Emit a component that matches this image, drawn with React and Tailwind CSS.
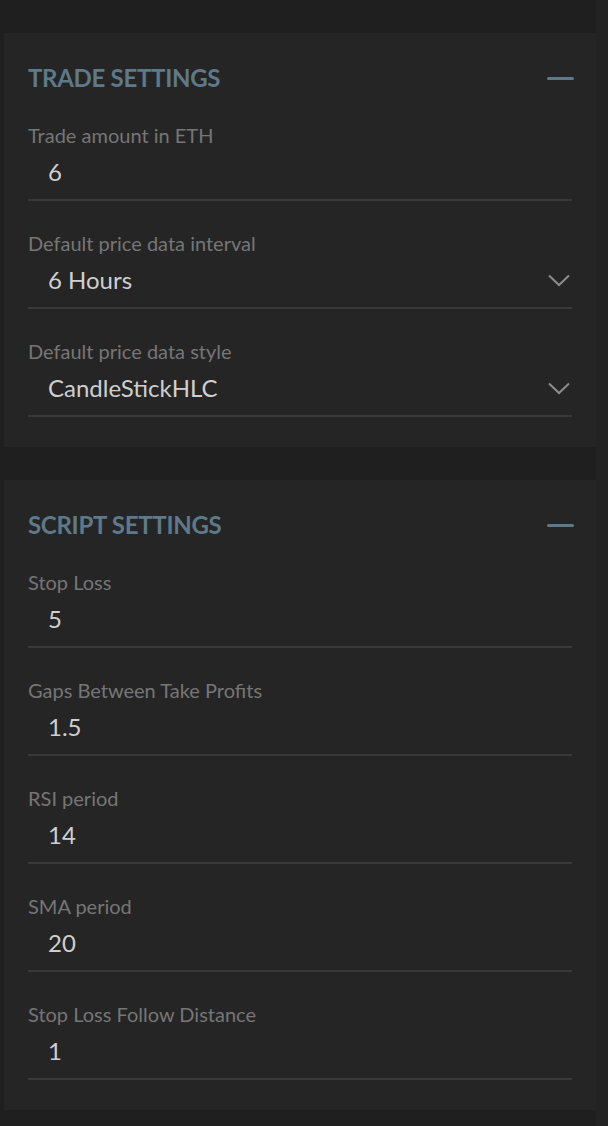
import React from "react";

const trade = [
    { label: "Trade amount in ETH", value: "6" },
    { label: "Default price data interval", value: "6 Hours", select: true },
    { label: "Default price data style", value: "CandleStickHLC", select: true },
];

const script = [
    { label: "Stop Loss", value: "5" },
    { label: "Gaps Between Take Profits", value: "1.5" },
    { label: "RSI period", value: "14" },
    { label: "SMA period", value: "20" },
    { label: "Stop Loss Follow Distance", value: "1" },
];

function Chevron() {
    return (
        <svg width="22" height="13" viewBox="0 0 22 13" fill="none" className="shrink-0">
            <path d="M1 1.5 L11 11 L21 1.5" stroke="#8c8c8c" strokeWidth="2" />
        </svg>
    );
}

function Field({ label, value, select }) {
    return (
        <div className="flex flex-col">
            <div className="h-[24px] flex items-center text-[20px] text-[#767676] leading-none">{label}</div>
            <div className="h-[54px] flex items-center justify-between pl-[20px] pr-[2px] pb-[2px] border-b-2 border-[#393939]">
                <span className="text-[24px] text-[#cfcfcf] leading-none">{value}</span>
                {select && <Chevron />}
            </div>
        </div>
    );
}

function Section({ title, fields }) {
    return (
        <div className="bg-[#252525] pt-[30px] pb-[30px] pl-[24px] pr-[24px]">
            <div className="h-[30px] flex items-center justify-between">
                <h2 className="text-[24px] font-bold text-[#5e7a8a] tracking-[-0.3px] leading-none">{title}</h2>
                <div className="w-[27px] h-[3px] bg-[#5e7a8a] rounded-sm mr-[-2px]" />
            </div>
            <div className="flex flex-col gap-[30px] mt-[30px]">
                {fields.map((f, i) => (
                    <Field key={i} {...f} />
                ))}
            </div>
        </div>
    );
}

export default function App() {
    return (
        <div className="min-h-[1126px] w-[608px] bg-[#1f1f1f] flex" style={{ fontFamily: "Lato, 'Open Sans', sans-serif" }}>
            <div className="w-[596px] pl-[4px] pt-[33px] flex flex-col gap-[33px]">
                <Section title="TRADE SETTINGS" fields={trade} />
                <Section title="SCRIPT SETTINGS" fields={script} />
            </div>
            <div className="w-[12px] bg-[#232323]" />
        </div>
    );
}
